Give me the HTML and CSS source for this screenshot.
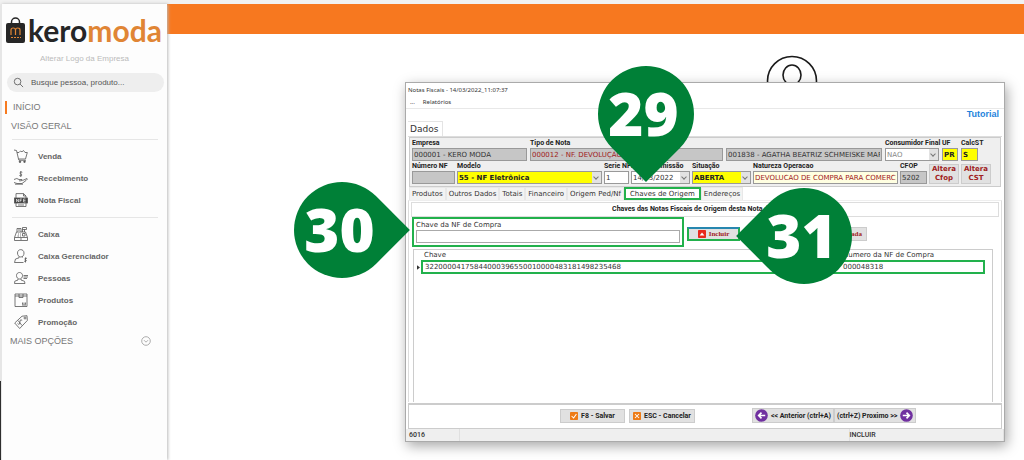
FILE: index.html
```html
<!DOCTYPE html>
<html lang="pt-BR">
<head>
<meta charset="utf-8">
<title>Kero Moda - Notas Fiscais</title>
<link rel="stylesheet" href="styles.css">
</head>
<body>
<div class="app">
  <div class="edge"></div>
  <aside class="sidebar">
    <a class="logo" href="#">
      <svg class="logo-bag" viewBox="0 0 19 26" aria-hidden="true">
        <path d="M5.500 7V5a4 4 0 0 1 8 0v2" fill="none" stroke="#262626" stroke-width="1.500"/>
        <rect x="0" y="6" width="19" height="20" rx="2" fill="#262626"/>
        <path d="M5 18v-5q0-2 2.200-2t2.300 2v5m0-5q0-2 2.300-2t2.200 2v5" fill="none" stroke="#e08535" stroke-width="1.200"/>
        <path d="M5 20.500h10" stroke="#e08535" stroke-dasharray="2 1"/>
      </svg>
      <span class="logo-text">kero<span class="logo-accent">moda</span></span>
    </a>
    <a class="change-logo" href="#">Alterar Logo da Empresa</a>
    <label class="search">
      <svg class="search-icon" viewBox="0 0 12 12" aria-hidden="true"><circle cx="5" cy="5" r="3.600"/><path d="M7.700 7.700L11 11"/></svg>
      <input type="text" placeholder="Busque pessoa, produto..." aria-label="Busca">
    </label>
    <a class="section section-active" href="#">INÍCIO</a>
    <h2 class="section">VISÃO GERAL</h2>
    <nav class="menu">
      <a href="#"><svg viewBox="0 0 14 14"><path d="M0 1l2.500.500 2 8.500h7L13.300 3.500H11M3 3.500h2M5 3.500l1.500-1.500 1.500.800 1.500-1.300 1.500 2M4.500 10l.5 1.300h7"/><circle cx="6" cy="12.800" r=".8" class="solid"/><circle cx="10.500" cy="12.800" r=".8" class="solid"/></svg>Venda</a>
      <a href="#"><svg viewBox="0 0 14 14"><path d="M8.300 1.300C6 .300 5 2.500 6.800 3S8 5.500 5.300 4.500M6.800 0v6M0 8.500q3-2 5 0h3q1 1-1 1.300H5M8.500 9.500l4.500-2q1 .5-1 2L8 12.500H3L0 11.500M1 13.200h8"/></svg>Recebimento</a>
      <a href="#"><svg viewBox="0 0 14 14"><path d="M2 5V.600h7.500L12 3v2M9.500.600V3H12M2 10v3.500h10V10M4 12h6"/><rect x=".5" y="5" width="13" height="5" class="solid"/><path class="light" d="M2.500 9V6l2 3V6M6 9V6h2M6 7.500h1.500M11.500 6H9.500v3h2M9.500 7.500h2"/></svg>Nota Fiscal</a>
    </nav>
    <nav class="menu">
      <a href="#"><svg viewBox="0 0 14 14"><path d="M.500 13.500v-3L2.500 5h9l2 5.500v3zM.500 10.500h13M3 5V1.500h4V5M8.500 5V.500h4v2h-4M10.500 2.500V5M4 3h2M4 7h1M6 7h1M3.500 9h1.500M6 9h1M8.500 6.500h2.500v2.500H8.500zM6 12h2"/></svg>Caixa</a>
      <a href="#"><svg viewBox="0 0 14 14"><path d="M3.500 4C3.500-.500 10-.500 10 4c0 2-1 4-3.200 4S3.500 6 3.500 4zM5 7.500v1.300L1.500 10 .500 13.500h9M8.500 7.500V8.500M13 9.500c-2-1-3 .800-1.500 1.300s1 2.200-1.500 1.300M11.500 8.500v5"/></svg>Caixa Gerenciador</a>
      <a href="#"><svg viewBox="0 0 14 14"><path d="M2.500 4.500C2.500.500 8.500.500 8.500 4.500c0 1.800-1 3.500-3 3.500s-3-1.700-3-3.500zM4 8v1L.800 10.200.500 12.500h10.500l-.5-2.200L7 9V8M9.500 4.500H14M9.500 6H14M9.500 7.500H13"/></svg>Pessoas</a>
      <a href="#"><svg viewBox="0 0 14 14"><path d="M1 1h12v12.500H1zM1 3h12M5 1v3.500h4V1M8.500 9.500v2M10 9.500v2M11.500 9.500v2M8 12h4"/></svg>Produtos</a>
      <a href="#"><svg viewBox="0 0 14 14"><path d="M.700 8L8 1.200l5-.5.300 4.800-7.600 8zM8.200 5.200q-2.200-1-2.200.800t-.5 3q-1 .8-2-.7M4 5.500l4 5"/><circle cx="11" cy="3" r="1"/></svg>Promoção</a>
    </nav>
    <button class="more" type="button">MAIS OPÇÕES
      <svg viewBox="0 0 10 10" aria-hidden="true"><circle cx="5" cy="5" r="4.300"/><path d="M3 4.200l2 2 2-2"/></svg>
    </button>
  </aside>
  <main class="page">
    <div class="topbar"></div>
    <svg class="avatar" viewBox="0 0 52 52" aria-hidden="true"><circle cx="26" cy="26" r="24.500"/><ellipse cx="26" cy="20" rx="9" ry="10"/></svg>
  </main>
</div>

<section class="window">
  <header class="title">Notas Fiscais - 14/03/2022_11:07:37</header>
  <nav class="menubar"><button type="button">...</button><button type="button">Relatórios</button></nav>
  <div class="outer-tabs">
    <button class="outer-tab" type="button">Dados</button>
    <a class="tutorial" href="#">Tutorial</a>
  </div>
  <form class="form">
    <div class="row row-one">
      <label class="field"><span>Empresa</span><input class="grey" value="000001 - KERO MODA" readonly></label>
      <label class="field"><span>Tipo de Nota</span><input class="grey red" value="000012 - NF. DEVOLUÇÃO DE COMPRA" readonly></label>
      <label class="field"><input class="grey" value="001838 - AGATHA BEATRIZ SCHMEISKE MARTINS" aria-label="Pessoa" readonly></label>
      <label class="field"><span>Consumidor Final</span><span class="combo"><select class="muted"><option>NAO</option></select></span></label>
      <label class="field"><span>UF</span><input class="yellow" value="PR"></label>
      <label class="field"><span>CalcST</span><input class="yellow" value="S"></label>
    </div>
    <div class="row row-two">
      <label class="field"><span>Número NF</span><input class="grey" readonly></label>
      <label class="field"><span>Modelo</span><span class="combo"><select class="yellow"><option>55 - NF Eletrônica</option></select></span></label>
      <label class="field"><span>Serie NF</span><input value="1"></label>
      <label class="field"><span>Data de Emissão</span><span class="combo"><input value="14/03/2022"></span></label>
      <label class="field"><span>Situação</span><span class="combo"><select class="yellow"><option>ABERTA</option></select></span></label>
      <label class="field"><span>Natureza Operacao</span><input class="cream red" value="DEVOLUCAO DE COMPRA PARA COMERCIALIZACAO"></label>
      <label class="field"><span>CFOP</span><input class="grey" value="5202" readonly></label>
      <button class="alter" type="button">Altera<br>Cfop</button>
      <button class="alter" type="button">Altera<br>CST</button>
    </div>
  </form>
  <div class="tabs">
    <button type="button">Produtos</button><button type="button">Outros Dados</button><button type="button">Totais</button><button type="button">Financeiro</button><button type="button">Origem Ped/Nf</button><button class="current" type="button">Chaves de Origem</button><button type="button">Endereços</button>
  </div>
  <div class="panel">
    <h1 class="panel-title">Chaves das Notas Fiscais de Origem desta Nota de Entrada</h1>
    <div class="key-row">
      <label class="key"><span>Chave da NF de Compra</span><input></label>
      <button class="btn include" type="button"><svg viewBox="0 0 10 10" aria-hidden="true"><rect width="10" height="10" rx="1" fill="#e8291c"/><path d="M2 7h6L5 3z" fill="#fff"/></svg>Incluir</button>
      <button class="btn remove" type="button">Excluir Selecionada</button>
    </div>
    <div class="grid">
      <table>
        <thead><tr><th class="mark"></th><th>Chave</th><th class="num">Numero da NF de Compra</th><th class="end"></th></tr></thead>
        <tbody><tr><td class="mark"><svg viewBox="0 0 4 6" aria-label="Linha atual"><path d="M0 0l4 3-4 3z"/></svg></td><td class="hit hit-first">32200004175844000396550010000483181498235468</td><td class="hit hit-last">000048318</td><td></td></tr></tbody>
      </table>
    </div>
  </div>
  <div class="actions">
    <div class="action-group">
      <button class="btn" type="button"><svg viewBox="0 0 10 10" aria-hidden="true"><rect width="10" height="10" rx="1" fill="#ee7b16"/><path d="M2 5l2.500 2.500L8 2.500" fill="none" stroke="#fff" stroke-width="1.300"/></svg>F8 - Salvar</button>
      <button class="btn" type="button"><svg viewBox="0 0 10 10" aria-hidden="true"><rect width="10" height="10" rx="1" fill="#ee7b16"/><path d="M2.500 2.500l5 5m0-5l-5 5" fill="none" stroke="#fff" stroke-width="1.300"/></svg>ESC - Cancelar</button>
    </div>
    <div class="action-group pager">
      <button class="btn" type="button"><svg class="round" viewBox="0 0 14 14" aria-hidden="true"><circle cx="7" cy="7" r="6.800" fill="#7030a0"/><path d="M11 7H4m3-3L4 7l3 3" fill="none" stroke="#fff" stroke-width="1.800"/></svg>&lt;&lt; Anterior (ctrl+A)</button>
      <button class="btn" type="button">(ctrl+Z) Proximo &gt;&gt;<svg class="round" viewBox="0 0 14 14" aria-hidden="true"><circle cx="7" cy="7" r="6.800" fill="#7030a0"/><path d="M3 7h7M7 4l3 3-3 3" fill="none" stroke="#fff" stroke-width="1.800"/></svg></button>
    </div>
  </div>
  <footer class="status"><span>6016</span><span></span><span>INCLUIR</span></footer>
</section>

<div class="pin pin-down">29</div>
<div class="pin pin-right">30</div>
<div class="pin pin-left">31</div>
</body>
</html>
```
FILE: styles.css
```css
* { box-sizing: border-box; }
body {
  margin: 0;
  min-height: 100vh;
  background: #fff;
  color: #333;
  font-family: "DejaVu Sans", sans-serif;
  font-size: 7px;
  position: relative;
  overflow: hidden;
}
a { color: inherit; text-decoration: none; }
button, input, select { font: inherit; color: inherit; margin: 0; border-radius: 0; }
button { padding: 0; border: 0; background: none; }
h1, h2 { margin: 0; font: inherit; }

.app { display: flex; min-height: 100vh; border-top: 4px solid #f1f1f1; }
.edge { flex: none; width: 1px; background: linear-gradient(to top, #111 79px, #eee 79px); }
.sidebar {
  width: 166px;
  flex: none;
  padding-top: 11px;
  border-left: 1px solid #e6e6e6;
  background: #fdfdfd;
  box-shadow: 1px 0 3px #bbb;
  font-family: "Liberation Sans", sans-serif;
  font-size: 8px;
  color: #777;
  z-index: 1;
}
.logo { display: flex; height: 30px; padding-left: 4px; gap: 3px; align-items: center; }
.logo-bag { width: 19px; height: 26px; flex: none; }
.logo-text { font: bold 30px/28px Lato, sans-serif; color: #262626; }
.logo-accent { color: #e08535; }
.change-logo { display: block; margin-top: 8px; text-align: center; line-height: 12px; color: #bbb; }
.search {
  display: flex;
  align-items: center;
  gap: 7px;
  height: 19px;
  margin: 8px 3px 0 5px;
  padding: 0 6px;
  border-radius: 10px;
  background: #eee;
}
.search-icon { width: 11px; height: 11px; fill: none; stroke: #666; flex: none; }
.search input { flex: 1; min-width: 0; padding: 0; border: 0; outline: 0; background: none; }
.search input::placeholder { color: #555; opacity: 1; }
.section { display: block; margin: 0 10px 0 3px; padding-left: 6px; font-size: 9px; line-height: 13px; color: #777; }
.section-active { margin-top: 9px; margin-bottom: 6px; border-left: 2px solid #f77b20; }
.menu { margin: 6px 9px 0 10px; padding-top: 5px; border-top: 1px solid #e6e6e6; }
.menu a { display: flex; align-items: center; gap: 10px; height: 22px; padding-left: 2px; font-weight: bold; color: #666; }
.menu svg { width: 14px; height: 14px; fill: none; stroke: #555; stroke-width: .8; }
.menu .solid { fill: #444; }
.menu .light { stroke: #fff; stroke-width: .6; }
.more { display: flex; justify-content: space-between; align-items: center; width: 100%; padding: 0 16px 0 8px; font-size: 9px; line-height: 16px; color: #777; }
.more svg { width: 10px; height: 10px; fill: none; stroke: #999; stroke-width: .8; }

.page { flex: 1; }
.topbar { height: 30px; background: #f7781f; }
.avatar { display: block; width: 52px; height: 52px; margin: 21px auto 0 599px; fill: none; stroke: #1a1a1a; stroke-width: 1.6; }

.window {
  position: absolute;
  left: 405px;
  right: 19px;
  top: 82px;
  padding: 0 2px;
  border: 1px solid #aaa;
  background: #fff;
  box-shadow: 2px 4px 12px rgba(0, 0, 0, .35);
  z-index: 2;
}
.title { line-height: 14px; }
.title, .menubar { font-family: "Noto Sans", sans-serif; font-size: 6px; }
.menubar { display: flex; gap: 8px; margin: 0 -2px; padding-left: 4px; border-bottom: 1px solid #e8e8e8; line-height: 11px; }
.outer-tabs { display: flex; justify-content: space-between; align-items: flex-end; height: 28px; border-bottom: 1px solid #ddd; }
.outer-tab { padding: 0 4px 0 2px; border: solid #e4e4e4; border-width: 1px 1px 0 0; font-size: 9px; line-height: 14px; }
.tutorial { align-self: flex-start; padding: 0 3px; font: bold 9px/11px "Liberation Sans", sans-serif; color: #1f83dc; }

.form { display: block; margin: 0 1px; padding: 0 9px 2px 2px; border: 1px solid #ccc; background: #efefef; }
.row { display: grid; align-items: end; height: 23px; }
.row-one { grid-template-columns: 115fr 193fr 156fr 54px 16px 17px 10px; column-gap: 3px; }
.row-two { grid-template-columns: 43px 146fr 25px 59px 59px 146fr 27px 30px 30px; column-gap: 2px; }
.field { display: block; min-width: 0; }
.field > span:not(.combo) { display: block; font: bold 7px/9px Roboto, sans-serif; color: #222; white-space: nowrap; }
.field input, .field select {
  display: block;
  width: 100%;
  height: 13px;
  padding: 0 1px;
  border: 1px solid #999;
  outline: 0;
  background: #fff;
  color: #333;
  appearance: none;
}
.combo { display: block; position: relative; }
.combo::before { content: ""; position: absolute; right: 1px; top: 1px; width: 9px; height: 11px; background: #e2e2e2; }
.combo::after { content: ""; position: absolute; right: 4px; top: 4px; width: 3px; height: 3px; border: solid #777; border-width: 0 1px 1px 0; transform: rotate(45deg); }
.field .grey { background: #c6c6c6; }
.field .red { color: #a02020; }
.field .muted { color: #888; }
.field .yellow { background: #ff0; font-weight: bold; color: #222; }
.field .cream { background: #ffffe1; }
.alter { height: 20px; border: 1px solid #ccc; background: #e1e1e1; font-weight: bold; line-height: 9px; color: #a02020; }

.tabs { display: flex; height: 13px; padding-left: 1px; white-space: nowrap; }
.tabs button { padding: 0 2px; border: 1px solid #e8e8e8; background: #f3f3f3; border-bottom: 0; }
.tabs .current { padding: 0 4px; border: 2px solid #22b14c; background: #fff; }
.panel { padding: 1px 2px 0; border: 1px solid #ddd; border-top-color: #eee; border-bottom: 0; }
.panel-title { border: 1px solid #ddd; font: bold 7px/13px Roboto, sans-serif; text-align: center; color: #222; }
.key-row { display: flex; align-items: flex-end; padding-left: 1px; }
.key { flex: 0 1 272px; height: 30px; padding: 1px 2px 0; border: 2px solid #22b14c; }
.key span { display: block; line-height: 10px; }
.key input { display: block; width: 100%; height: 13px; padding: 0 2px; border: 1px solid #aaa; }
.btn { display: flex; align-items: center; justify-content: center; gap: 3px; min-width: 65px; height: 14px; padding: 0 3px; border: 1px solid #ccc; background: #e1e1e1; font: bold 7px/12px Roboto, sans-serif; color: #222; white-space: nowrap; }
.btn svg { width: 8px; height: 8px; flex: none; }
.include, .remove { margin-bottom: 6px; color: #a02020; font-family: "Liberation Serif", serif; }
.include { min-width: 53px; margin-left: 3px; padding: 0; border: 2px solid #22b14c; border-top-color: #2787b0; }
.remove { justify-content: flex-end; min-width: 86px; margin-left: 41px; padding: 0 4px; }
.grid { height: 153px; margin: 2px 6px 1px 2px; border: 1px solid #ccc; border-bottom: 0; }
table { width: 100%; border-collapse: collapse; table-layout: fixed; }
th, td { padding: 0 2px; font-weight: normal; text-align: left; line-height: 10px; }
.mark { width: 8px; padding: 0 1px; }
.mark svg { display: block; width: 3px; height: 5px; margin-left: 2px; fill: #333; }
.num { width: 143px; }
.end { width: 8px; }
.hit { border: solid #22b14c; border-width: 2px 0; }
.hit-first { border-left-width: 2px; }
.hit-last { border-right-width: 2px; }

.actions { display: flex; gap: 57px; align-items: center; height: 26px; padding: 0 0 2px 151px; border: 1px solid #ccc; border-top-width: 2px; }
.action-group { display: flex; gap: 4px; }
.pager { gap: 0; }
.pager .btn { min-width: 81px; height: 15px; padding: 0 2px; }
.btn .round { width: 13px; height: 13px; }
.status { display: grid; grid-template-columns: 54px 386fr 153fr; margin: 0 -2px; background: #efefef; font: 500 7px/12px Roboto, sans-serif; }
.status span { padding-left: 3px; border-right: 1px solid #e0e0e0; }
.status span:last-child { padding-left: 0; }

.pin {
  position: absolute;
  width: 96px;
  height: 96px;
  padding-right: 5px;
  color: #fff;
  font: 800 60px/94px "Open Sans", sans-serif;
  text-align: center;
  z-index: 3;
}
.pin::before { content: ""; position: absolute; inset: 0; z-index: -1; background: #008037; border-radius: 50% 50% 0 50%; }
.pin-down { left: 598px; top: 66px; }
.pin-right { left: 294px; top: 182px; }
.pin-left { left: 756px; top: 188px; }
.pin-down::before { transform: rotate(45deg); }
.pin-right::before { transform: rotate(-45deg); }
.pin-left::before { transform: rotate(135deg); }
```
